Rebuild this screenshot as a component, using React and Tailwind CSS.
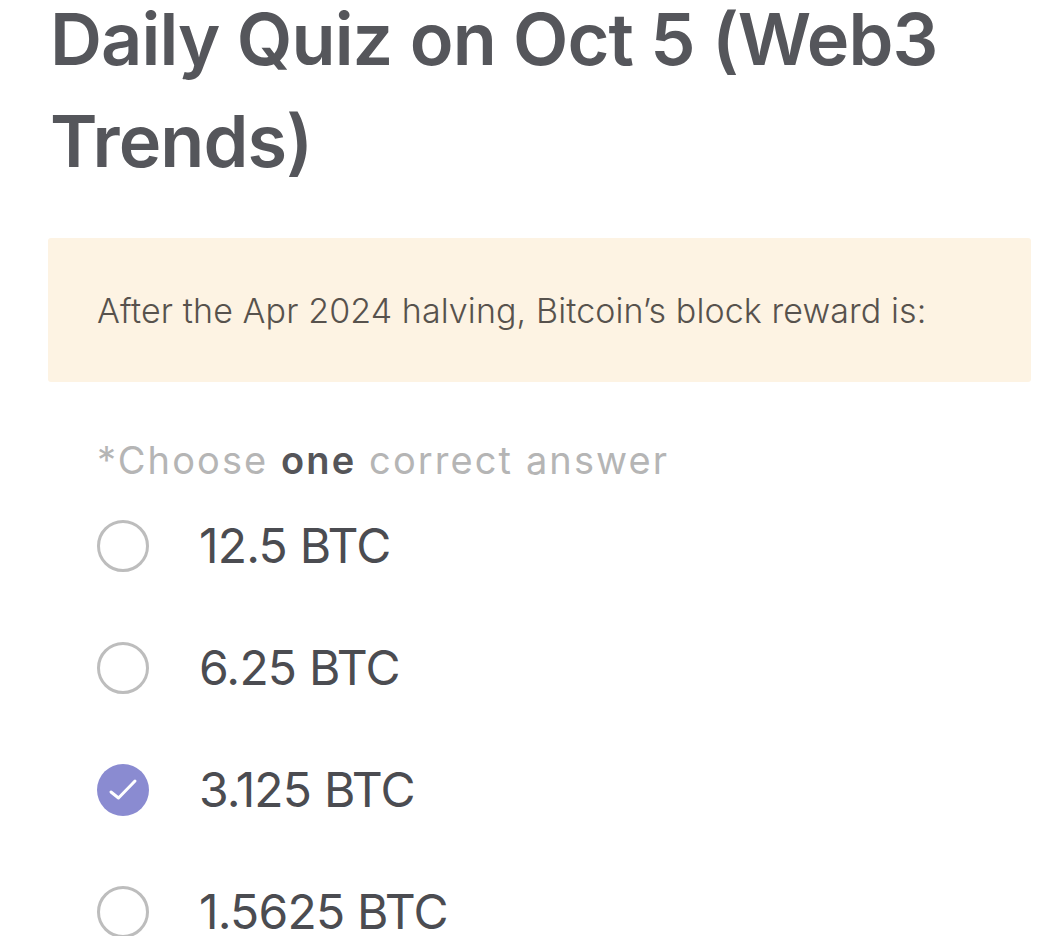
import React from "react";

const options = ["12.5 BTC", "6.25 BTC", "3.125 BTC", "1.5625 BTC"];

export default function App() {
  return (
    <div className="w-[1055px] h-[936px] overflow-hidden bg-white" style={{ fontFamily: "Inter, 'Noto Sans', sans-serif" }}>
      <h1 className="pl-[50px] text-[72px] font-semibold text-[#55565b] tracking-[-0.9px]">
        <span className="block leading-[78px]">Daily Quiz on Oct 5 (Web3</span>
        <span className="block leading-[101px] mt-[12px]">Trends)</span>
      </h1>
      <div className="ml-[48px] mr-[24px] mt-[47px] h-[144px] bg-[#fdf3e3] rounded-[3px] flex items-center pl-[49px]">
        <p className="text-[34px] font-light text-[#57524d] tracking-[0.1px]">
          After the Apr 2024 halving, Bitcoin’s block reward is:
        </p>
      </div>
      <p className="ml-[97px] mt-[55px] text-[38px] leading-[46px] text-[#b5b5b5] tracking-[2.1px]">
        *Choose <span className="font-semibold text-[#555559]">one</span> correct answer
      </p>
      <div className="ml-[97px] mt-[37px] flex flex-col gap-[70px]">
        {options.map((o, i) => (
          <div key={o} className="flex items-center h-[52px]">
            {i === 2 ? (
              <div className="w-[52px] h-[52px] rounded-full bg-[#8a8bd1]">
                <svg width="52" height="52" viewBox="0 0 52 52" fill="none" stroke="white" strokeWidth="3" strokeLinecap="round" strokeLinejoin="round">
                  <path d="M14 28l7.5 6L38 17" />
                </svg>
              </div>
            ) : (
              <div className="w-[52px] h-[52px] rounded-full border-[3px] border-[#bdbdbd]" />
            )}
            <span className="ml-[50px] text-[48px] text-[#4b4c51] tracking-[-0.8px]">{o}</span>
          </div>
        ))}
      </div>
    </div>
  );
}
